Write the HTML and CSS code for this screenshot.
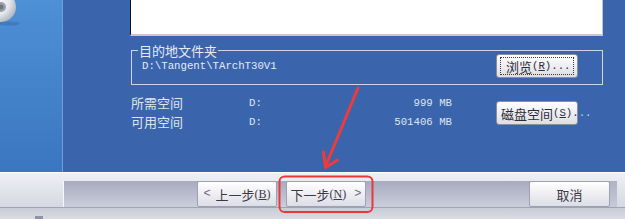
FILE: index.html
```html
<!DOCTYPE html>
<html lang="zh-CN">
<head>
<meta charset="utf-8">
<title>安装向导</title>
<link rel="stylesheet" href="styles.css">
</head>
<body>
<div class="window">
  <div class="main">
    <div class="side">
      <svg class="disc" width="30" height="30" viewBox="0 0 30 30">
        <defs>
          <radialGradient id="dg" cx="0.3" cy="0.3" r="0.8">
            <stop offset="0" stop-color="#ffffff"/>
            <stop offset="0.6" stop-color="#e6e8ec"/>
            <stop offset="1" stop-color="#a9b0bb"/>
          </radialGradient>
        </defs>
        <ellipse cx="9" cy="23.5" rx="11" ry="2" fill="#3b6fae" opacity="0.6"/>
        <circle cx="1" cy="7" r="15" fill="url(#dg)"/>
        <circle cx="1" cy="7" r="5" fill="#9aa1ab"/>
        <circle cx="1" cy="7" r="2.5" fill="#6e7680"/>
      </svg>
    </div>
    <div class="content">
      <div class="listbox"></div>
      <div class="group">
        <span class="legend">目的地文件夹</span>
        <span class="path a">D:\Tangent\TArchT30V1</span>
        <button class="btn browse"><span class="focus">浏览<span class="a">(<u>R</u>)...</span></span></button>
      </div>
      <div class="space">
        <div class="table">
          <span class="lbl">所需空间</span><span class="a drv">D:</span><span class="a val">999 MB</span>
          <span class="lbl">可用空间</span><span class="a drv">D:</span><span class="a val">501406 MB</span>
        </div>
        <button class="btn disk">磁盘空间<span class="a">(<u>S</u>).<span class="out">..</span></span></button>
      </div>
    </div>
  </div>
  <div class="footer">
    <div class="bar">
      <div class="track">
        <button class="btn nav back"><span class="chev a">&lt;</span>上一步<span class="key">(<u>B</u>)</span></button>
        <button class="btn nav next">下一步<span class="key">(<u>N</u>)</span><span class="chev a">&gt;</span></button>
        <span class="fill"></span>
        <button class="btn nav cancel">取消</button>
      </div>
      <span class="tail"></span>
    </div>
    <div class="strip"><span class="mark"></span></div>
  </div>
  <svg class="annot" width="625" height="219" viewBox="0 0 625 219">
    <line x1="358" y1="88" x2="325.5" y2="166.5" stroke="#ee3b3b" stroke-width="3" stroke-linecap="round"/>
    <polyline points="323.5,152 325.5,167.5 337.5,160" fill="none" stroke="#ee3b3b" stroke-width="3" stroke-linecap="round" stroke-linejoin="round"/>
    <rect x="279.5" y="176.5" width="93" height="35.5" rx="5" fill="none" stroke="#e8383a" stroke-width="2"/>
  </svg>
</div>
</body>
</html>
```

FILE: styles.css
```css
* { box-sizing: border-box; }
html, body { margin: 0; padding: 0; }
body {
  width: 625px;
  height: 219px;
  overflow: hidden;
  font-family: "Noto Sans CJK SC", "Noto Sans", sans-serif;
  font-size: 13px;
}
.window {
  position: relative;
  width: 625px;
  height: 219px;
  display: flex;
  flex-direction: column;
}
.main {
  height: 172px;
  display: flex;
  background: #3a64ac;
}
.side {
  width: 63px;
  border-right: 1px solid #6d9fd9;
  background: linear-gradient(to bottom, #4d90d5, #3b76c0);
  display: flex;
  flex-direction: column;
}
.disc { display: block; }
.content {
  flex: 1;
  display: flex;
  flex-direction: column;
  padding: 0 22px 0 67px;
  color: #dfe4ef;
}
.listbox {
  height: 36px;
  background: #ffffff;
  border-left: 1px solid #101010;
  border-right: 1px solid #c4c4c4;
  border-bottom: 2px solid #c8c8c8;
}
.a {
  font-family: "Liberation Mono", "DejaVu Sans Mono", monospace;
  font-size: 10.7px;
}
.group {
  position: relative;
  margin: 14px 0 0 1px;
  height: 35px;
  border: 1px solid #cdd5e8;
  display: flex;
  justify-content: space-between;
  align-items: flex-start;
  padding: 3px 24px 0 10px;
}
.legend {
  position: absolute;
  top: -8px;
  left: 6px;
  padding: 0 1px;
  line-height: 15px;
  background: #3a64ac;
  color: #e6eaf3;
}
.path {
  line-height: 24px;
  color: #e6eaf3;
}
.btn {
  height: 24px;
  margin: 0;
  border: 1px solid #8c8e9c;
  border-radius: 3px;
  background: linear-gradient(to bottom, #ffffff, #f0f0f4 45%, #dcdde6);
  color: #2c2c38;
  font-family: "Noto Sans CJK SC", sans-serif;
  font-size: 13px;
  line-height: 1;
  display: flex;
  align-items: center;
  white-space: nowrap;
  padding: 0;
}
.browse {
  width: 82px;
  padding: 2px 3px;
}
.focus {
  flex: 1;
  align-self: stretch;
  display: flex;
  align-items: center;
  border: 1px dotted #3a3a3a;
  padding-left: 5px;
}
.space {
  display: flex;
  align-items: flex-start;
  margin-top: 8px;
  padding-left: 1px;
}
.table {
  display: grid;
  grid-template-columns: 118px 60px 143px;
  grid-auto-rows: 19px;
  align-items: center;
}
.val { text-align: right; }
.disk {
  width: 82px;
  margin: 8px 0 0 44px;
  padding-left: 4px;
  overflow: visible;
}
.out { color: #d4d8e6; }
.footer {
  height: 47px;
  display: flex;
  flex-direction: column;
}
.bar {
  height: 35px;
  border-top: 1px solid #ffffff;
  padding: 8px 0 0 63px;
  display: flex;
  align-items: flex-start;
  background: linear-gradient(to bottom, #eef0f5, #d6d8e2);
}
.track {
  flex: 1;
  height: 26px;
  display: flex;
  padding-left: 134px;
  border-left: 1px solid #f6f7fa;
  background: linear-gradient(to bottom, #a7abbf, #b9bccd 50%, #cbcedb);
}
.tail {
  width: 7px;
  height: 26px;
  margin-right: 8px;
  background: linear-gradient(to bottom, #b0b3c4, #c6c9d6);
}
.nav {
  height: 26px;
  width: 80px;
  border-color: #9ea1b2;
  border-radius: 2px;
  justify-content: center;
  color: #3a3a46;
}
.back { margin-left: -1px; }
.next { margin-left: 9px; }
.cancel { width: 81px; }
.fill { flex: 1; }
.key { font-family: "Liberation Serif", serif; font-size: 12px; }
.chev { color: #6a6c7a; font-size: 12px; }
.back .chev { margin-right: 5px; }
.next .chev { margin-left: 8px; }
.strip {
  flex: 1;
  border-top: 1px solid #a0a3b4;
  background: linear-gradient(to bottom, #c9cbd6, #dadce4);
  position: relative;
  padding-left: 35px;
  display: flex;
  align-items: flex-end;
}
.mark {
  width: 8px;
  height: 3px;
  background: #8f93a3;
}
.annot {
  position: absolute;
  left: 0;
  top: 0;
  pointer-events: none;
}
```
